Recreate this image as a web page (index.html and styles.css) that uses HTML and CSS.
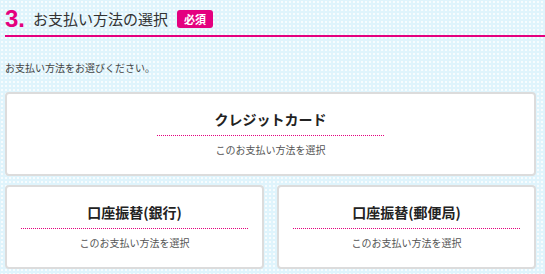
FILE: index.html
```html
<!DOCTYPE html>
<html lang="ja">
  <head>
    <meta charset="utf-8" />
    <title>お支払い方法の選択</title>
    <link rel="stylesheet" href="styles.css">
  </head>
  <body>
    <div class="payment">
      <div class="payment-head">
        <span class="step-no">3.</span>
        <h2 class="step-title">お支払い方法の選択</h2>
        <span class="badge">必須</span>
      </div>

      <p class="payment-lead">お支払い方法をお選びください。</p>

      <div class="method-list">
        <div class="method method-wide">
          <div class="method-name">クレジットカード</div>
          <div class="method-note">このお支払い方法を選択</div>
        </div>
        <div class="method">
          <div class="method-name">口座振替(銀行)</div>
          <div class="method-note">このお支払い方法を選択</div>
        </div>
        <div class="method">
          <div class="method-name">口座振替(郵便局)</div>
          <div class="method-note">このお支払い方法を選択</div>
        </div>
      </div>
    </div>
  </body>
</html>
```

FILE: styles.css
```css
html, body {
  margin: 0;
  padding: 0;
}

body {
  font-family: "Noto Sans CJK JP", "Liberation Sans", sans-serif;
  color: #333;
  background-color: #dff4fc;
  background-image: radial-gradient(circle, #f7fcfe 0.8px, transparent 1px);
  background-size: 4px 4px;
  height: 274px;
  overflow: hidden;
}

.payment {
  padding: 0 9px 0 5px;
}

/* section heading */
.payment-head {
  display: flex;
  align-items: center;
  height: 33px;
  padding-top: 2px;
  margin-right: -9px;
  border-bottom: 2px solid #e4007f;
}

.step-no {
  font-family: "Liberation Sans", Arial, sans-serif;
  font-weight: bold;
  font-size: 24px;
  color: #e4007f;
  margin-right: 8px;
}

.step-title {
  margin: 0;
  font-size: 15px;
  font-weight: normal;
  color: #333;
}

.badge {
  margin-left: 9px;
  padding: 0 7px;
  height: 18px;
  line-height: 18px;
  font-size: 11px;
  font-weight: bold;
  color: #fff;
  background: #e4007f;
  border-radius: 3px;
}

.payment-lead {
  margin: 23px 0 0;
  font-size: 10px;
  line-height: 16px;
  color: #444;
}

/* payment methods */
.method-list {
  display: grid;
  grid-template-columns: 1fr 1fr;
  column-gap: 13px;
  row-gap: 9px;
  margin-top: 16px;
}

.method {
  background: #fff;
  border: 2px solid #dcdcdc;
  border-radius: 4px;
  padding: 15px 0 16px;
  text-align: center;
}

.method-wide {
  grid-column: 1 / 3;
}

.method-name {
  width: 227px;
  margin: 0 auto;
  padding-bottom: 7px;
  font-size: 14px;
  line-height: 20px;
  font-weight: bold;
  color: #222;
  /* 1px pink dots, 1px apart */
  background: repeating-linear-gradient(to right, #e4007f 0 1px, transparent 1px 2px) left bottom / 100% 1px no-repeat;
}

.method-note {
  margin-top: 6px;
  font-size: 10px;
  line-height: 16px;
  color: #555;
}
```
